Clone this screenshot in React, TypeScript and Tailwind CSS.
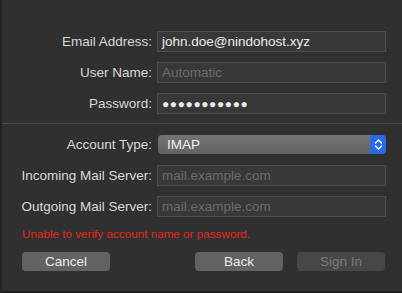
import React from 'react';

const font = { fontFamily: '"Liberation Sans", Arial, sans-serif' };

const Field = ({ value, placeholder, password }: { value?: string; placeholder?: string; password?: boolean }) => (
  <div className="h-[21px] w-[229px] border border-[#4d4d4d] bg-[#383838] flex items-center px-[4px] text-[13.5px] leading-none">
    {value ? (
      <span className={password ? 'text-[#ededed] tracking-[0.6px] text-[12px]' : 'text-[#ececec]'}>{value}</span>
    ) : (
      <span className="text-[#6c6c6c]">{placeholder}</span>
    )}
  </div>
);

const Row = ({ label, children }: { label: string; children: React.ReactNode }) => (
  <div className="flex items-center">
    <div className="w-[152px] text-right text-[13.5px] text-[#d9d9d9] leading-none">{label}</div>
    <div className="ml-[5px]">{children}</div>
  </div>
);

const App: React.FC = () => {
  return (
    <div className="w-[402px] h-[293px] bg-[#303030] relative overflow-hidden border-l-2 border-[#232323]" style={font}>
      <div className="flex flex-col pt-[31px] ml-[-2px]">
        <div className="flex flex-col gap-[10px]">
          <Row label="Email Address:">
            <Field value="john.doe@nindohost.xyz" />
          </Row>
          <Row label="User Name:">
            <Field placeholder="Automatic" />
          </Row>
          <Row label="Password:">
            <Field value="●●●●●●●●●●●" password />
          </Row>
        </div>
        <div className="h-px bg-[#4a4a4a] mt-[9px]" />
        <div className="flex flex-col gap-[10px] mt-[11px]">
          <Row label="Account Type:">
            <div className="h-[19px] w-[228px] ml-[1px] rounded-[4px] flex overflow-hidden bg-gradient-to-b from-[#747474] to-[#636363] mb-[1px]">
              <div className="flex-1 flex items-center pl-[9px] text-[13.5px] text-[#f0f0f0] leading-none">IMAP</div>
              <div className="w-[16px] bg-[#2a6ae0] flex items-center justify-center">
                <svg width="9" height="13" viewBox="0 0 9 13" fill="none" stroke="#fff" strokeWidth="1.4" strokeLinecap="round" strokeLinejoin="round">
                  <path d="M1.5 5 L4.5 2 L7.5 5" />
                  <path d="M1.5 8 L4.5 11 L7.5 8" />
                </svg>
              </div>
            </div>
          </Row>
          <Row label="Incoming Mail Server:">
            <Field placeholder="mail.example.com" />
          </Row>
          <Row label="Outgoing Mail Server:">
            <Field placeholder="mail.example.com" />
          </Row>
        </div>
        <div className="mt-[10px] pl-[22px] text-[11.7px] text-[#e5271f] leading-[14px]">
          Unable to verify account name or password.
        </div>
        <div className="flex mt-[11px] pl-[22px] text-[13.5px] leading-none">
          <div className="w-[88px] h-[19px] rounded-[4px] bg-[#626262] text-[#ececec] flex items-center justify-center">Cancel</div>
          <div className="w-[88px] h-[19px] rounded-[4px] bg-[#626262] text-[#ececec] flex items-center justify-center ml-[85px]">Back</div>
          <div className="w-[88px] h-[19px] rounded-[4px] bg-[#474747] text-[#7a7a7a] flex items-center justify-center ml-[14px]">Sign In</div>
        </div>
      </div>
      <div className="absolute left-0 right-0 bottom-0 h-[2px] bg-[#1c1c1c]" />
    </div>
  );
};

export default App;
